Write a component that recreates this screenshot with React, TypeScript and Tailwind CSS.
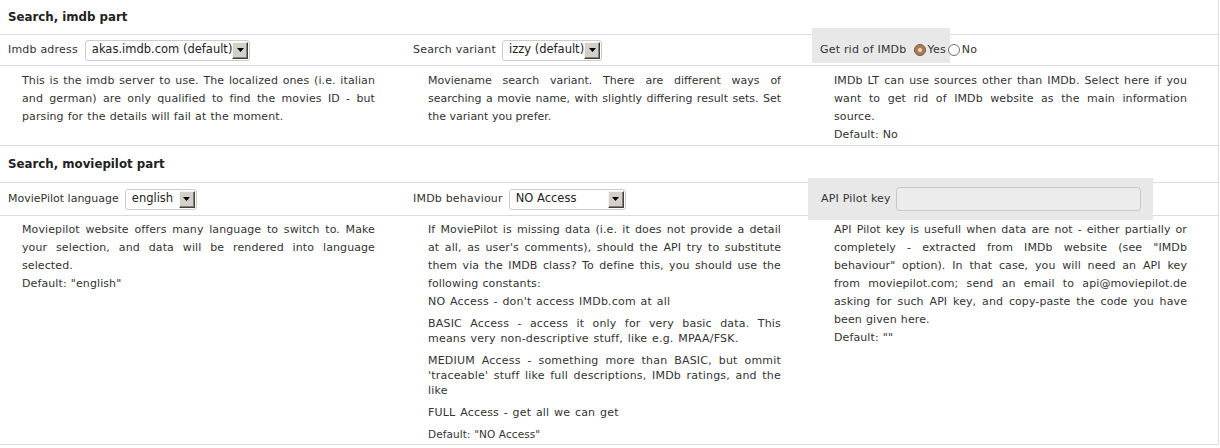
const font = { fontFamily: '"DejaVu Sans", Verdana, sans-serif' };

const Arrow = () => (
  <span className="flex h-[17px] w-[16px] items-center justify-center border border-t-[#f4f4f4] border-l-[#f4f4f4] border-r-[#404040] border-b-[#404040] bg-[#d4d0c8] shadow-[inset_-1px_-1px_0_#808080]">
    <svg width="7" height="4" viewBox="0 0 7 4">
      <path d="M0 0h7L3.5 4z" fill="#000" />
    </svg>
  </span>
);

const Select = ({ value, className }: { value: string; className: string }) => (
  <div
    className={`flex h-[21px] items-center justify-between rounded-[3px] border border-[#cccccc] bg-white pl-[6px] pr-[1px] text-[11.5px] tracking-normal text-[#222] ${className}`}>
    <span className="whitespace-nowrap">{value}</span>
    <Arrow />
  </div>
);

const Radio = ({ checked }: { checked?: boolean }) =>
  checked ? (
    <span className="flex h-[12px] w-[12px] shrink-0 items-center justify-center rounded-full border border-[#7a5638] bg-[#a97c5c]">
      <span className="h-[4px] w-[4px] rounded-full bg-[#f2d9c2]" />
    </span>
  ) : (
    <span className="block h-[12px] w-[12px] shrink-0 rounded-full border border-[#707070] bg-white" />
  );

const Header = ({ title, className }: { title: string; className: string }) => (
  <div className={`flex items-center border-b border-[#dddddd] pl-2 pt-[2px] text-[11.8px] font-bold text-[#222] ${className}`}>
    {title}
  </div>
);

const Desc = ({ children, className = '' }: { children: React.ReactNode; className?: string }) => (
  <div className={`pl-[22px] pr-[31px] text-justify leading-[18px] ${className}`}>{children}</div>
);

const spaced = 'tracking-[0.1px] [word-spacing:0.5px]';

export default function App() {
  return (
    <div className="w-[1219px] border-r border-[#dddddd] bg-white text-[11px] text-[#333]" style={font}>
      <Header title="Search, imdb part" className="h-[35px]" />

      <div className="grid h-[31px] grid-cols-3 grid-rows-[30px] border-b border-[#dddddd] tracking-[0.2px]">
        <div className="flex items-center gap-[7px] pl-2">
          <span>Imdb adress</span>
          <Select value="akas.imdb.com (default)" className="w-[165px]" />
        </div>
        <div className="flex items-center gap-[6px] pl-[7px]">
          <span>Search variant</span>
          <Select value="izzy (default)" className="w-[100px]" />
        </div>
        <div className="flex items-start">
          <div className="relative -mt-[7px] flex h-[35px] w-[138px] items-center whitespace-nowrap bg-[#e8e8e8] pl-2 pt-[9px]">
            <span>Get rid of IMDb</span>
            <span className="ml-[8px] flex items-center">
              <Radio checked />
              <span className="ml-[1px]">Yes</span>
              <span className="ml-[2px]">
                <Radio />
              </span>
              <span className="ml-[2px]">No</span>
            </span>
          </div>
        </div>
      </div>

      <div className="grid h-[80px] grid-cols-3 border-b border-[#dddddd] pt-[6px]">
        <Desc className={spaced}>
          This is the imdb server to use. The localized ones (i.e. italian and german) are only qualified to find the
          movies ID - but parsing for the details will fail at the moment.
        </Desc>
        <Desc>
          Moviename search variant. There are different ways of searching a movie name, with slightly differing result
          sets. Set the variant you prefer.
        </Desc>
        <Desc className={spaced}>
          <p>
            IMDb LT can use sources other than IMDb. Select here if you want to get rid of IMDb website as the main
            information source.
          </p>
          <p>Default: No</p>
        </Desc>
      </div>

      <Header title="Search, moviepilot part" className="h-[37px]" />

      <div className="grid h-[33px] grid-cols-3 grid-rows-[32px] border-b border-[#dddddd] tracking-[0.2px]">
        <div className="flex items-center gap-[6px] pl-2">
          <span className="tracking-normal">MoviePilot language</span>
          <Select value="english" className="w-[72px]" />
        </div>
        <div className="flex items-center gap-[6px] pl-[7px]">
          <span>IMDb behaviour</span>
          <Select value="NO Access" className="w-[117px]" />
        </div>
        <div className="flex min-h-0 items-center">
          <div className="relative -ml-[4px] flex h-[42px] w-[345px] shrink-0 items-center bg-[#e8e8e8] pl-[13px]">
            <span>API Pilot key</span>
            <div className="ml-[5px] h-[24px] w-[245px] rounded-[4px] border border-[#c8c8c8] bg-[#ececec]" />
          </div>
        </div>
      </div>

      <div className="grid h-[229px] grid-cols-3 border-b border-[#dddddd] pt-[5px]">
        <Desc className={spaced}>
          <p>
            Moviepilot website offers many language to switch to. Make your selection, and data will be rendered into
            language selected.
          </p>
          <p>Default: "english"</p>
        </Desc>
        <Desc>
          <p className={spaced}>
            If MoviePilot is missing data (i.e. it does not provide a detail at all, as user's comments), should the API
            try to substitute them via the IMDB class? To define this, you should use the following constants:
          </p>
          <ul className="mt-[1px] leading-[15px] tracking-[0.2px] [word-spacing:1px]">
            <li>NO Access - don't access IMDb.com at all</li>
            <li className="mt-[7px]">
              BASIC Access - access it only for very basic data. This means very non-descriptive stuff, like e.g.
              MPAA/FSK.
            </li>
            <li className="mt-[7px]">
              MEDIUM Access - something more than BASIC, but ommit 'traceable' stuff like full descriptions, IMDb
              ratings, and the like
            </li>
            <li className="mt-[7px]">FULL Access - get all we can get</li>
          </ul>
          <p className="mt-[7px] text-[10.5px] leading-[15px] tracking-[0.1px]">Default: "NO Access"</p>
        </Desc>
        <Desc className={spaced}>
          <p>
            API Pilot key is usefull when data are not - either partially or completely - extracted from IMDb website
            (see "IMDb behaviour" option). In that case, you will need an API key from moviepilot.com; send an email to
            api@moviepilot.de asking for such API key, and copy-paste the code you have been given here.
          </p>
          <p>Default: ""</p>
        </Desc>
      </div>
    </div>
  );
}
